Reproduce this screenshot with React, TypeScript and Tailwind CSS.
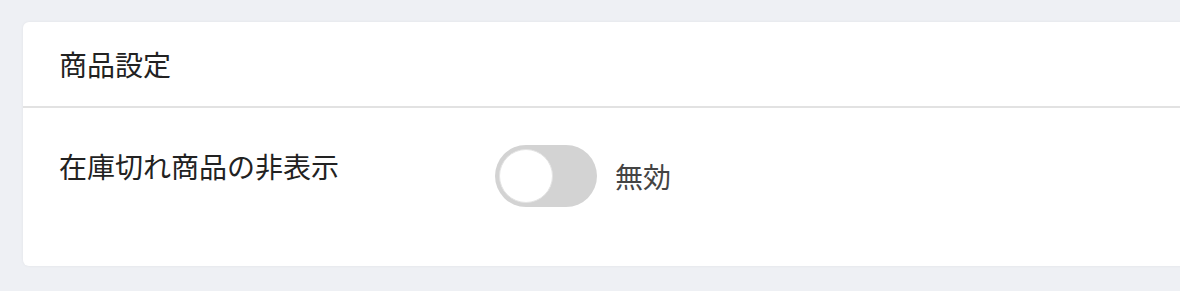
import React, { useState } from 'react'

const font = { fontFamily: '"Noto Sans CJK JP", "Noto Sans", sans-serif' }

const Toggle: React.FC<{ on: boolean; onChange: (v: boolean) => void }> = ({ on, onChange }) => {
  return (
    <button
      type="button"
      onClick={() => onChange(!on)}
      className={`relative h-[62px] w-[102px] shrink-0 rounded-full p-[4px] ${on ? 'bg-[#4a90e2]' : 'bg-[#d3d3d3]'}`}
    >
      <span
        className={`block h-[54px] w-[54px] rounded-full border border-[#e4e4e4] bg-white ${on ? 'translate-x-[40px]' : ''}`}
      />
    </button>
  )
}

export default function App() {
  const [hideSoldOut, setHideSoldOut] = useState(false)

  return (
    <div className="h-[291px] w-full overflow-hidden bg-[#eef0f4] pl-[23px] pt-[22px]" style={font}>
      <section className="w-[1200px] rounded-[6px] bg-white shadow-[0_0_3px_rgba(0,0,0,0.06)]">
        <header className="flex h-[86px] items-center border-b-2 border-[#e2e2e2] px-[36px]">
          <h2 className="text-[28px] leading-none text-[#222]">商品設定</h2>
        </header>

        <div className="flex px-[36px] pt-[37px] pb-[59px]">
          <div className="w-[436px] text-[28px] leading-[42px] text-[#222]">在庫切れ商品の非表示</div>
          <div className="flex items-center">
            <Toggle on={hideSoldOut} onChange={setHideSoldOut} />
            <span className="ml-[18px] text-[28px] leading-none text-[#444]">
              {hideSoldOut ? '有効' : '無効'}
            </span>
          </div>
        </div>
      </section>
    </div>
  )
}
